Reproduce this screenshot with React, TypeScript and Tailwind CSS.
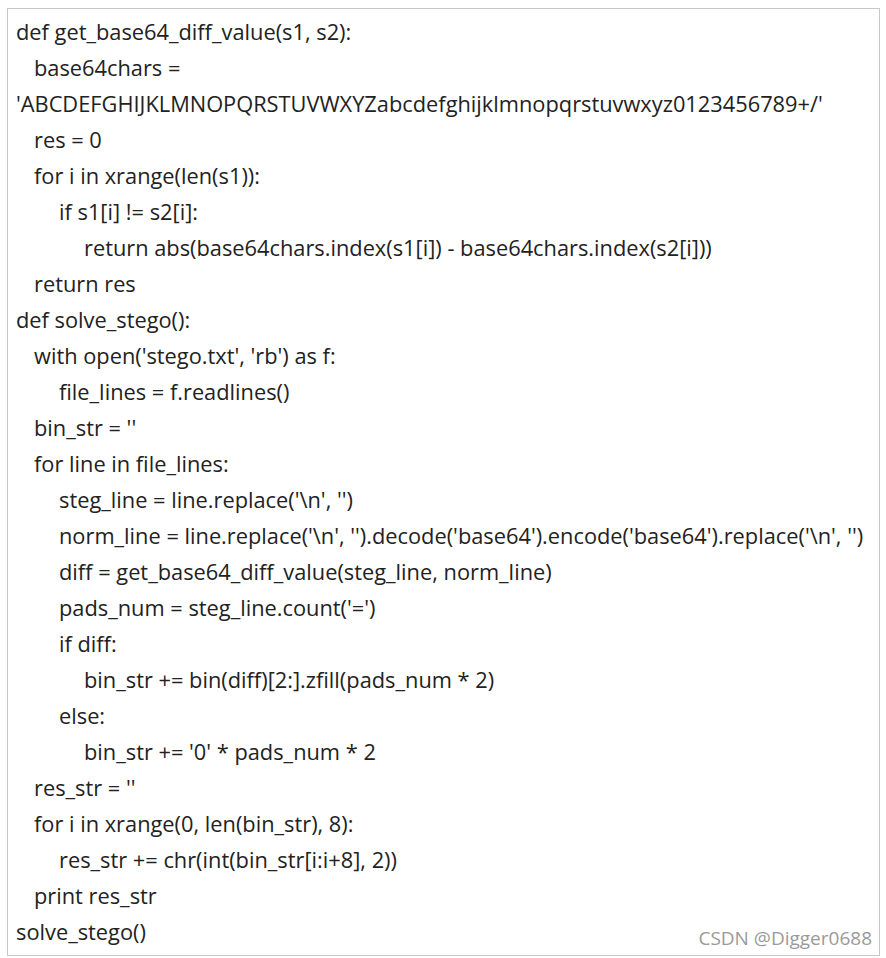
import React from "react";

const lines: [number, string][] = [
  [0, "def get_base64_diff_value(s1, s2):"],
  [1, "base64chars ="],
  [0, "'ABCDEFGHIJKLMNOPQRSTUVWXYZabcdefghijklmnopqrstuvwxyz0123456789+/'"],
  [1, "res = 0"],
  [1, "for i in xrange(len(s1)):"],
  [2, "if s1[i] != s2[i]:"],
  [3, "return abs(base64chars.index(s1[i]) - base64chars.index(s2[i]))"],
  [1, "return res"],
  [0, "def solve_stego():"],
  [1, "with open('stego.txt', 'rb') as f:"],
  [2, "file_lines = f.readlines()"],
  [1, "bin_str = ''"],
  [1, "for line in file_lines:"],
  [2, "steg_line = line.replace('\\n', '')"],
  [2, "norm_line = line.replace('\\n', '').decode('base64').encode('base64').replace('\\n', '')"],
  [2, "diff = get_base64_diff_value(steg_line, norm_line)"],
  [2, "pads_num = steg_line.count('=')"],
  [2, "if diff:"],
  [3, "bin_str += bin(diff)[2:].zfill(pads_num * 2)"],
  [2, "else:"],
  [3, "bin_str += '0' * pads_num * 2"],
  [1, "res_str = ''"],
  [1, "for i in xrange(0, len(bin_str), 8):"],
  [2, "res_str += chr(int(bin_str[i:i+8], 2))"],
  [1, "print res_str"],
  [0, "solve_stego()"],
];

const indentClass = ["pl-0", "pl-[18px]", "pl-[43px]", "pl-[68px]"];

export default function App() {
  return (
    <div className="w-[886px] h-[958px] bg-white pt-[8px] pl-[7px]">
      <div
        className="relative w-[873px] h-[948px] border border-[#c8c8c8] pt-[5px] pl-[8px] text-[21.8px] leading-[36px] text-[#222]"
        style={{ fontFamily: '"Open Sans", "Noto Sans", sans-serif' }}
      >
        {lines.map(([lvl, t], i) => (
          <div key={i} className={`whitespace-pre ${indentClass[lvl]}`}>
            {t}
          </div>
        ))}
        <div className="absolute right-[7px] bottom-[5px] text-[19px] leading-[24px] text-[#9a9a9a]">
          CSDN @Digger0688
        </div>
      </div>
    </div>
  );
}
